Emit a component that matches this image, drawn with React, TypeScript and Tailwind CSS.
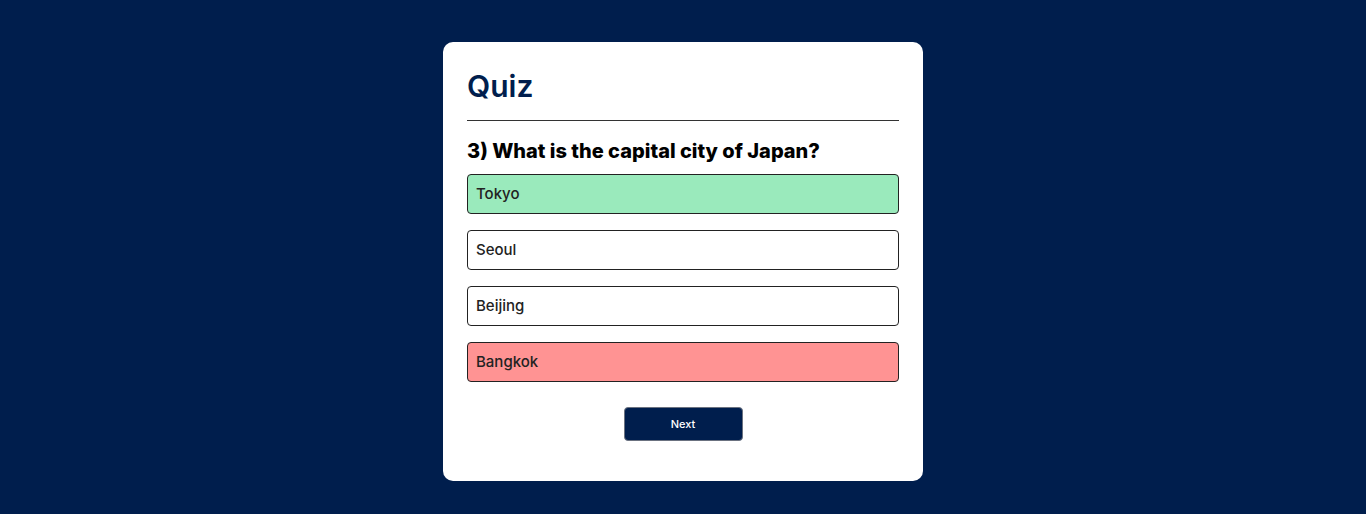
import React from 'react';

const options = [
  { label: 'Tokyo', state: 'correct' },
  { label: 'Seoul', state: 'idle' },
  { label: 'Beijing', state: 'idle' },
  { label: 'Bangkok', state: 'wrong' },
];

const App = () => {
  return (
    <div className="min-h-[514px] bg-[#001e4d] pt-[42px] font-['Inter',sans-serif]">
      <div className="mx-auto w-[480px] rounded-[10px] bg-white px-6 pt-6 pb-10">
        <h1 className="border-b border-[#333] pb-[14px] text-[30px] leading-[40px] font-semibold text-[#001e4d]">Quiz</h1>

        <div className="pt-4">
          <h2 className="text-[20px] leading-[28px] font-extrabold text-black">3) What is the capital city of Japan?</h2>

          <div className="mt-[9px] flex flex-col gap-4">
            {options.map((opt) => (
              <button
                key={opt.label}
                className={
                  'h-10 w-full rounded border border-[#222] px-2 text-left text-[15px] font-medium text-[#222] ' +
                  (opt.state === 'correct' ? 'bg-[#9aeabc]' : opt.state === 'wrong' ? 'bg-[#ff9393]' : 'bg-white')
                }
              >
                {opt.label}
              </button>
            ))}
          </div>

          <div className="mt-[25px] flex justify-center">
            <button className="h-[34px] w-[119px] rounded border border-[#6b7280] bg-[#001e4d] text-[11px] font-medium text-white">
              Next
            </button>
          </div>
        </div>
      </div>
    </div>
  );
};

export default App;
